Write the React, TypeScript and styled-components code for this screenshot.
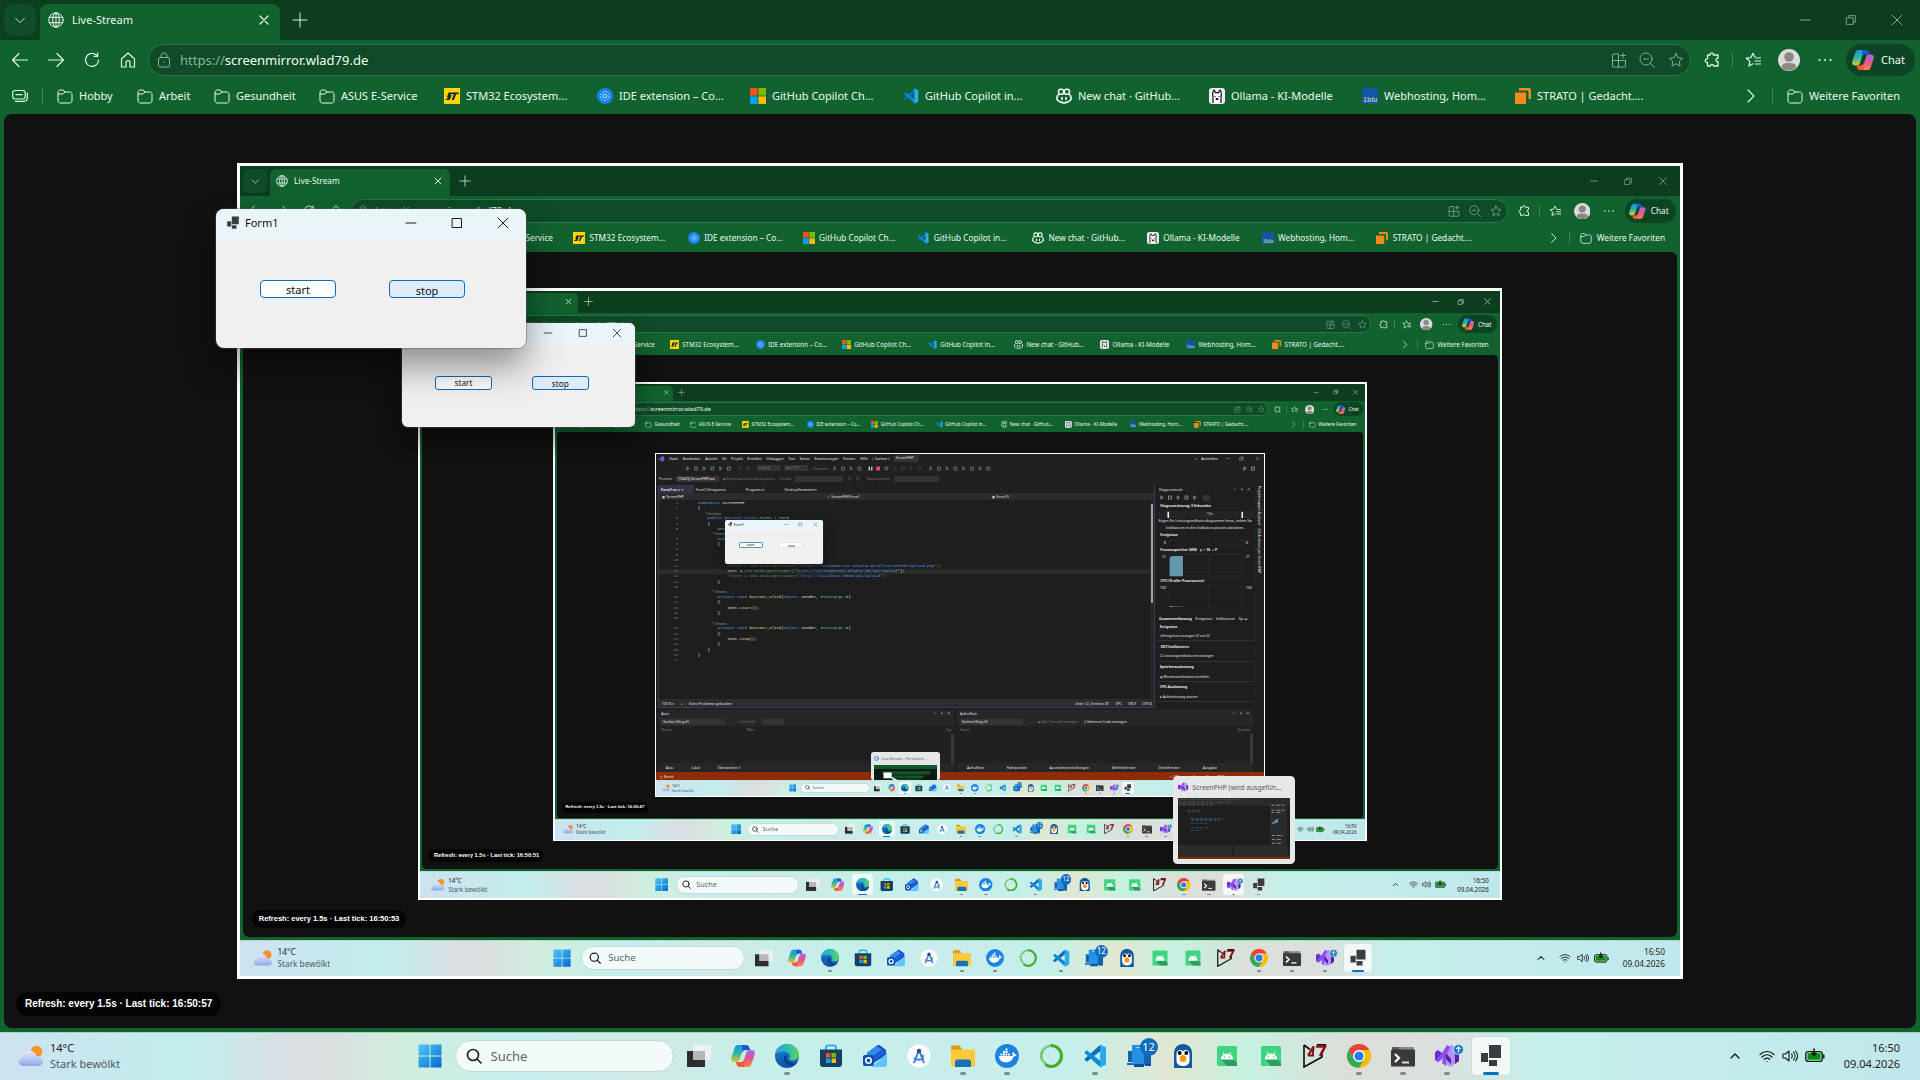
import React from 'react';
import type { ReactNode } from 'react';
import styled, { createGlobalStyle, css } from 'styled-components';

const ui = '"Noto Sans", "Open Sans", sans-serif';
const mono = '"Liberation Mono", monospace';

const GlobalStyle = createGlobalStyle`
  * { box-sizing: border-box; }
  html, body, #root { height: 100%; margin: 0; }
  body { background: #111; overflow: hidden; font: 11px/16px ${ui}; }
  button, input, select { font: inherit; color: inherit; border: 0; background: none; padding: 0; margin: 0; outline: 0; }
  a { color: inherit; text-decoration: none; }
  svg { display: block; flex: none; }
`;

/* ---------- icons ---------- */

const Line = ({ d, s = 16, w = 1, children }: { d?: string; s?: number; w?: number; children?: ReactNode }) => (
  <svg width={s} height={s} viewBox="0 0 16 16" fill="none" stroke="currentColor" strokeWidth={w} strokeLinecap="round" strokeLinejoin="round">
    {d && <path d={d} />}
    {children}
  </svg>
);

const cross = 'M4 4l8 8M12 4l-8 8';
const star = 'M8 1.3l2 4.3 4.7.6-3.5 3.2.9 4.7L8 11.8l-4.1 2.3.9-4.7L1.3 6.2 6 5.6z';
const folder = 'M1 4.5C1 3 2 2 3.500 2H6l2 2h4.500C14 4 15 5 15 6.500v6c0 1.500-1 2.500-2.500 2.500h-9C2 15 1 14 1 12.500zM1 6h4.500L8 4';

const Globe = () => (
  <Line>
    <circle cx="8" cy="8" r="7.200" />
    <ellipse cx="8" cy="8" rx="3.300" ry="7.200" />
    <path d="M8 .8v14.400M1.500 5.300h13M1.500 10.700h13" />
  </Line>
);

const StLogo = () => (
  <svg width="16" height="16" viewBox="0 0 16 16">
    <path fill="#ffd400" d="M0 0h16v16H0z" />
    <path fill="#16233c" d="M4.500 4.500H15l-.8 1.700h-2L9.800 12H7.600L10 6.200H6.400l-.4.8h1.800L5.700 12H1.500l.8-1.500h1.700l.4-1H2.800z" />
  </svg>
);
const IdeLogo = () => (
  <svg width="16" height="16" viewBox="0 0 16 16" fill="none" stroke="#cfe6ff">
    <circle cx="8" cy="8" r="8" fill="#1583ee" stroke="none" />
    <circle cx="8" cy="8" r="4.500" strokeWidth=".9" strokeDasharray="2 1" />
    <circle cx="8" cy="8" r="2" />
  </svg>
);
const MsLogo = ({ s = 16 }: { s?: number }) => (
  <svg width={s} height={s} viewBox="0 0 16 16">
    <path fill="#f25022" d="M0 0h7.600v7.600H0z" />
    <path fill="#7fba00" d="M8.400 0H16v7.600H8.400z" />
    <path fill="#00a4ef" d="M0 8.400h7.600V16H0z" />
    <path fill="#ffb900" d="M8.400 8.400H16V16H8.400z" />
  </svg>
);
const VsCode = ({ s = 16 }: { s?: number }) => (
  <svg width={s} height={s} viewBox="0 0 24 24">
    <path fill="#0a6fc2" d="M17 1L1.200 15.300l2.600 2.400L17.500 7z" />
    <path fill="#1187d8" d="M17 23L1.200 8.700l2.600-2.400L17.500 17z" />
    <path fill="#2da9f2" d="M17 .5l6 2.700v17.600l-6 2.700z" />
  </svg>
);
const GithubCopilot = () => (
  <svg width="16" height="16" viewBox="0 0 16 16" fill="none" stroke="#eafff2" strokeWidth="1.600">
    <rect x="2.600" y="1.200" width="5" height="5" rx="2" />
    <rect x="8.400" y="1.200" width="5" height="5" rx="2" />
    <path d="M2.500 6.500C.6 8 .8 9.500.9 11.500 3 13.800 5.500 14.900 8 14.900s5-1.100 7.100-3.400c.1-2 .3-3.500-1.600-5" />
    <path d="M6 9.500v2M10 9.500v2" strokeLinecap="round" />
  </svg>
);
const Ollama = () => (
  <svg width="16" height="16" viewBox="0 0 16 16">
    <rect width="16" height="16" rx="3" fill="#eee" />
    <path d="M4 15V9c-.5-3 0-6 .8-7 .8 0 1.200 1.500 1.300 2.600h3.800C10 3.500 10.400 2 11.200 2c.8 1 1.300 4 .8 7v6" fill="#fff" stroke="#111" strokeWidth="1.200" />
    <path d="M6 8v1M10 8v1M7 10.500h2v1H7z" stroke="#111" />
  </svg>
);
const OneBlu = () => (
  <svg width="16" height="16" viewBox="0 0 16 16">
    <path fill="#1555a5" d="M0 0h16v16H0z" />
    <text x="1" y="14" fontSize="7" fontWeight="700" fill="#a9c8a0" fontFamily="Liberation Sans, sans-serif">1blu</text>
  </svg>
);
const Strato = () => (
  <svg width="16" height="16" viewBox="0 0 16 16" fill="#f28a1c">
    <path d="M0 4.500h11V16H0zM4 0h10c1 0 2 1 2 2v9h-2.500V4.500c0-1.500-.5-2-2-2H4z" />
  </svg>
);
const Copilot = ({ s = 24 }: { s?: number }) => (
  <svg width={s} height={s} viewBox="0 0 24 24">
    <defs>
      <linearGradient id="cpA" x1="0" y1="0" x2="0" y2="1">
        <stop offset="0" stopColor="#1d8fe8" />
        <stop offset=".5" stopColor="#2bb8a3" />
        <stop offset="1" stopColor="#e9c51e" />
      </linearGradient>
      <linearGradient id="cpB" x1="0" y1="0" x2="0" y2="1">
        <stop offset="0" stopColor="#a66bf0" />
        <stop offset=".5" stopColor="#e7528f" />
        <stop offset="1" stopColor="#f98d3a" />
      </linearGradient>
    </defs>
    <path fill="url(#cpA)" d="M7 1h8c-2 1-2.500 3-3.200 5L9 14.500C8.300 17 7.500 18 5 18H3.500C.5 18-.5 16 .5 13L3.200 5C4 2.500 5 1 7 1z" />
    <path fill="#1b57c9" d="M11 1h4.500C17.500 1 18 2.500 18.500 4l.7 2H15c-2 0-2.800 1-3.400 2.600z" />
    <path fill="url(#cpB)" d="M17 23H9c2-1 2.500-3 3.200-5L15 9.500C15.700 7 16.500 6 19 6h1.500c3 0 4 2 3 5l-2.700 8c-.8 2.500-1.800 4-3.800 4z" />
    <path fill="#f15a3a" d="M13 23H8.500C6.500 23 6 21.500 5.500 20l-.7-2H9c2 0 2.800-1 3.400-2.600z" />
  </svg>
);
const Edge = () => (
  <svg width="24" height="24" viewBox="0 0 24 24">
    <defs>
      <linearGradient id="edA" x1="0" y1="0" x2="1" y2="0">
        <stop offset="0" stopColor="#2a9fe0" />
        <stop offset=".6" stopColor="#30c1a8" />
        <stop offset="1" stopColor="#66d254" />
      </linearGradient>
      <linearGradient id="edB" x1="0" y1="0" x2="0" y2="1">
        <stop offset="0" stopColor="#1b8ad6" />
        <stop offset="1" stopColor="#0b4fa3" />
      </linearGradient>
    </defs>
    <circle cx="12" cy="12" r="12" fill="url(#edB)" />
    <path fill="url(#edA)" d="M.3 10C1.500 4 6.200 0 12 0c7 0 12 5 12 10.500 0 3.500-2.700 6-6.200 6-2.800 0-4.200-1-3.600-2 1-1.200 1-2.400.6-3.500C14 9 12 7.600 9.200 7.600 5 7.600 1.500 9 .3 10z" />
    <path fill="#0d3f88" d="M9 12.500c-1 4 2 9.500 8 9.300 2-.1 4-1.300 5-3-3 1.400-6.500.7-9-1.500-1.700-1.500-1.700-3.500-.7-5.200C11 11.200 9.500 11.200 9 12.500z" />
  </svg>
);
const TaskView = () => (
  <svg width="24" height="24" viewBox="0 0 24 24">
    <path fill="#2d2d2d" d="M0 7h18v16H0z" />
    <path fill="#eef0f0" d="M6 1h18v15H6z" opacity=".95" />
    <path fill="#b5b8b8" d="M6 7h12v9H6z" />
  </svg>
);
const Store = () => (
  <svg width="24" height="24" viewBox="0 0 24 24">
    <path d="M7 6V3.500C7 2 8 1.500 9 1.500h6c1 0 2 .5 2 2V6" fill="none" stroke="#27b3ea" strokeWidth="2" />
    <path fill="#173f66" d="M1 5.500h22V20c0 2-1 3-3 3H4c-2 0-3-1-3-3z" />
    <path fill="#f25022" d="M7 9h4.500v4.500H7z" />
    <path fill="#7fba00" d="M12.500 9H17v4.500h-4.500z" />
    <path fill="#00a4ef" d="M7 14.500h4.500V19H7z" />
    <path fill="#ffb900" d="M12.500 14.500H17V19h-4.500z" />
  </svg>
);
const Outlook = () => (
  <svg width="24" height="24" viewBox="0 0 24 24">
    <path fill="#1c3fb8" d="M4 9L14 1.500c1-.7 2-.7 3 0l6 4.500v5L6 22H4z" />
    <path fill="#2f8df0" d="M4 9l10-7 5 3.500L6 15z" />
    <path fill="#1b5fd6" d="M6 15L20 5l3.500 3.500L8 20z" />
    <path fill="#5fc4ff" d="M24 9v11c0 2-1 3-3 3H9z" />
    <rect x="0" y="11" width="11" height="11" rx="2" fill="#0f4fae" />
    <circle cx="5.500" cy="16.500" r="2.700" fill="none" stroke="#fff" strokeWidth="1.600" />
  </svg>
);
const Studio = () => (
  <svg width="24" height="24" viewBox="0 0 24 24">
    <circle cx="12" cy="12" r="11.500" fill="#fbfdfe" />
    <path d="M12 6L7 19M12 6l5 13M7 14c3 2 7 2 10 0" stroke="#3f7be8" strokeWidth="2" fill="none" />
    <circle cx="12" cy="7" r="2.200" fill="#2b4c86" />
    <path d="M14 10l4 2-3 2z" fill="#35a860" />
  </svg>
);
const Explorer = () => (
  <svg width="24" height="24" viewBox="0 0 24 24">
    <path fill="#d99a16" d="M0 3c0-1 .6-1.500 1.500-1.500h7L11 5v3H0z" />
    <path fill="#fcc93a" d="M0 5.500h22.500c1 0 1.500.5 1.500 1.500v14c0 1-.5 1.500-1.500 1.500h-21C.5 22.500 0 22 0 21z" />
    <path fill="#1771b8" d="M4 23v-5c0-1.500 1-2.500 2.500-2.500h11c1.500 0 2.500 1 2.500 2.500v5z" />
  </svg>
);
const Docker = () => (
  <svg width="24" height="24" viewBox="0 0 24 24">
    <circle cx="12" cy="12" r="12" fill="#1d83e2" />
    <path fill="#fff" d="M4 12h13.500c.3-1 .2-2-.3-3l1-1c.9.700 1.300 1.500 1.300 2.400.7-.2 1.500-.1 2 .3-.5 1.100-1.500 1.700-2.800 1.700C17.500 16 15 18.300 11 18.300 6.500 18.300 4.200 16 4 12zM5.500 9.500h2v2h-2zM8 9.500h2v2H8zM10.500 9.500h2v2h-2zM13 9.500h2v2h-2zM8 7h2v2H8zM10.500 7h2v2h-2zM10.500 4.500h2v2h-2z" />
  </svg>
);
const Ring = () => (
  <svg width="24" height="24" viewBox="0 0 24 24" fill="none" stroke="#41ad2e">
    <path d="M12 1.500a10.500 10.500 0 0 1 0 21c-2 0-4-.8-5.500-2" strokeWidth="3" />
    <path d="M7 20C-1 14 1.500 3.500 12 1.500" strokeWidth="2.800" strokeDasharray="1.200 1" />
  </svg>
);
const Phone = () => (
  <svg width="24" height="24" viewBox="0 0 24 24">
    <path fill="#1463b0" d="M1 7h6v11H1zM0 19h9v2H0zM12 8h12v13H12z" />
    <path fill="#2492e0" d="M5 1h12v19H5z" />
    <path fill="#0f4e94" d="M7 20h10v3H7zM18 20h6v2h-6z" />
    <path fill="#8fd0fb" d="M9 3h4v1H9z" />
  </svg>
);
const Penguin = () => (
  <svg width="24" height="24" viewBox="0 0 24 24">
    <path fill="#0e5aa0" d="M3 24V9c0-5.500 4-9 9-9s9 3.500 9 9v15z" />
    <path fill="#fff" d="M5.500 10C5.500 5 12 5 12 8c0-3 6.500-3 6.500 2v7c0 3-3 5-6.500 5s-6.500-2-6.500-5z" />
    <circle cx="8.700" cy="9" r="1.900" />
    <circle cx="15.300" cy="9" r="1.900" />
    <ellipse cx="12" cy="14.500" rx="3.300" ry="3.600" fill="#f5941e" />
  </svg>
);
const Android = () => (
  <svg width="24" height="24" viewBox="0 0 24 24">
    <rect x="2" y="2" width="20" height="20" rx="1.500" fill="#3fd382" />
    <path fill="#2a9e60" d="M18 15l4 4v3H12l-6-7z" />
    <path fill="#fff" d="M5.800 15.500c.2-2.500 1.300-4.200 3-5.200L7.700 8.500l.7-.4 1.200 1.800a7 7 0 0 1 4.800 0l1.200-1.800.7.400-1.100 1.800c1.700 1 2.800 2.700 3 5.200z" />
    <circle cx="9.500" cy="13" r=".8" fill="#3fd382" />
    <circle cx="14.500" cy="13" r=".8" fill="#3fd382" />
  </svg>
);
const Seventeen = () => (
  <svg width="24" height="24" viewBox="0 0 24 24" fill="none" stroke="#0a0a0a" strokeWidth="1.600">
    <path d="M1 1v22l18-10V8" />
    <path d="M1 1l6 4.500M23 .8h-9" />
    <path d="M5 11.500L10.500 2.500 9.500 12M5 11.500h6" stroke="#8c1018" strokeWidth="2.200" />
    <path d="M13 2.500h9L17 12" stroke="#8c1018" strokeWidth="2.600" />
  </svg>
);
const Chrome = () => (
  <svg width="24" height="24" viewBox="0 0 24 24">
    <path fill="#ea4335" d="M1.600 6A12 12 0 0 1 22.400 6H12a6 6 0 0 0-5.200 9z" />
    <path fill="#fbbc04" d="M22.400 6A12 12 0 0 1 12 24l5.200-9A6 6 0 0 0 12 6z" />
    <path fill="#34a853" d="M12 24A12 12 0 0 1 1.600 6l5.200 9A6 6 0 0 0 17.200 15z" />
    <circle cx="12" cy="12" r="5.800" fill="#fff" />
    <circle cx="12" cy="12" r="4.600" fill="#2a7bea" />
  </svg>
);
const Terminal = () => (
  <svg width="24" height="24" viewBox="0 0 24 24">
    <path fill="#8a8a8a" d="M1 3h22v4H1z" />
    <path fill="#5c5c5c" d="M1 3h7v4H1z" />
    <rect x="0" y="5.500" width="24" height="17" rx="1" fill="#3a3a3a" />
    <path d="M4 10l4 4-4 4" stroke="#fff" strokeWidth="2.200" fill="none" />
    <path d="M11 18.500h7" stroke="#ddd" strokeWidth="2" />
  </svg>
);
const VisualStudio = ({ s = 24, up = false }: { s?: number; up?: boolean }) => (
  <svg width={s} height={s} viewBox="0 0 24 24" overflow="visible">
    <path fill="#6a2fd0" d="M0 8l3-2 4 3v6l-4 3-3-2z" />
    <path fill="#8b4ff0" d="M7 9l5-8 4 2-4 10-1 9-4-3 1-5-5 4-2-2z" />
    <path fill="#b18af8" d="M12 9l4-8 4 2v17l-5 3-4-3V9z" opacity=".9" />
    <path fill="#5320ac" d="M11 9l5 6v5l-5-5zM20 6l4 2v9l-4 3z" />
    {up && (
      <g>
        <circle cx="23.500" cy="5.500" r="5" fill="#1577c4" stroke="#e6f2f2" strokeWidth=".8" />
        <path d="M23.500 8.500V3M21.300 5.200L23.500 3l2.200 2.200" stroke="#fff" strokeWidth="1.200" fill="none" />
      </g>
    )}
  </svg>
);
const FormIcon = ({ s = 24 }: { s?: number }) => (
  <svg width={s} height={s} viewBox="0 0 24 24" fill="#3c3c40">
    <path d="M10 1h12v13H10zM2 9h7v9H2zM10 16h8v6h-8z" />
  </svg>
);
const StartLogo = () => (
  <svg width="24" height="24" viewBox="0 0 24 24">
    <defs>
      <linearGradient id="stA" x1="0" y1="0" x2="1" y2="1">
        <stop offset="0" stopColor="#4fcbfa" />
        <stop offset="1" stopColor="#0568cc" />
      </linearGradient>
    </defs>
    <path fill="url(#stA)" d="M.5.5h11v11H.5zM12.500.5h11v11h-11zM.5 12.500h11v11H.5zM12.500 12.500h11v11h-11z" />
  </svg>
);
const Weather = () => (
  <svg width="24" height="24" viewBox="0 0 24 24">
    <defs>
      <linearGradient id="weA" x1="0" y1="0" x2="0" y2="1">
        <stop offset="0" stopColor="#e6ebfc" />
        <stop offset="1" stopColor="#8fa9e8" />
      </linearGradient>
    </defs>
    <circle cx="17.500" cy="7.500" r="5.800" fill="#f5932a" />
    <path fill="url(#weA)" d="M5 22c-3 0-5-1.700-5-4s1.700-4 4-4.200C4.300 9.500 7 7 11 7c3.500 0 6 2.300 6.500 5.500C21 12.500 24 14 24 17.200S21.500 22 19 22z" />
  </svg>
);
const Battery = () => (
  <svg width="20" height="16" viewBox="0 0 20 16">
    <rect x=".7" y="3.500" width="16.600" height="10" rx="2.500" fill="#0d8a16" stroke="#1a1a1a" strokeWidth="1.200" />
    <rect x="2" y="4.800" width="14" height="7.400" rx="1.300" fill="none" stroke="#d9f2e4" strokeWidth=".8" />
    <path d="M18.800 6.500v4" stroke="#1a1a1a" strokeWidth="1.400" />
    <path d="M9 .5v6M6.500 4.500L9 7.500l2.500-3" stroke="#151515" strokeWidth="1.600" fill="none" />
  </svg>
);
const Avatar = () => (
  <svg width="22" height="22" viewBox="0 0 22 22">
    <circle cx="11" cy="11" r="11" fill="#dcdcdc" />
    <circle cx="11" cy="8" r="4.800" fill="#8c8884" />
    <path d="M3.500 18.500C4 14.500 7.500 14 11 14s7 .5 7.500 4.500A11 11 0 0 1 3.500 18.500z" fill="#8c8884" />
  </svg>
);

/* ---------- browser ---------- */

const Desktop = styled.div<{ $scale: number }>`
  zoom: ${p => p.$scale};
  flex: 1;
  min-width: 0;
  min-height: 0;
  height: ${p => (p.$scale === 1 ? '100%' : 'auto')};
  position: relative;
  display: flex;
  flex-direction: column;
  overflow: hidden;
  background: #11622f;
  font-size: 11px;
  line-height: 16px;
`;
const TabStrip = styled.header`
  height: 40px;
  display: flex;
  align-items: center;
  padding-left: 4px;
  background: #0c3d1f;
  color: #d3eadb;
`;
const IconButton = styled.button<{ $w?: number; $dim?: boolean }>`
  width: ${p => p.$w ?? 36}px;
  height: 32px;
  flex: none;
  display: flex;
  align-items: center;
  justify-content: center;
  color: ${p => (p.$dim ? '#7fae90' : '#dff3e6')};
`;
const TabSearch = styled(IconButton)`
  border-radius: 8px;
  background: #0e4d27;
`;
const Tab = styled.div`
  width: 240px;
  height: 36px;
  margin: 4px 0 0 4px;
  padding: 0 8px 4px;
  display: flex;
  align-items: center;
  gap: 8px;
  border-radius: 8px 8px 0 0;
  background: #11622f;
  color: #e6f7ec;
  & > span { flex: 1; }
`;
const Spacer = styled.div`flex: 1;`;
const Toolbar = styled.div`
  height: 40px;
  padding: 0 5px 0 2px;
  display: flex;
  align-items: center;
`;
const Address = styled.div`
  flex: 1;
  height: 32px;
  margin: 0 3px 0 2px;
  padding: 0 0 0 7px;
  display: flex;
  align-items: center;
  border: 1px solid #2b7445;
  border-radius: 16px;
  background: #0e4b26;
  color: #88b898;
  font-size: 13px;
  & > svg { margin-right: 8px; }
  & > input { flex: 1; min-width: 0; color: #f2fff6; }
`;
const Separator = styled.div<{ $m?: number }>`
  width: 1px;
  height: 16px;
  margin: 0 ${p => p.$m ?? 2}px;
  background: #3d8155;
`;
const ChatButton = styled.button`
  height: 32px;
  width: 69px;
  margin-left: 3px;
  padding-left: 6px;
  display: flex;
  align-items: center;
  gap: 7px;
  border-radius: 16px;
  background: #0c4524;
  color: #f1fff6;
  font-size: 11px;
`;
const Bookmarks = styled.nav`
  height: 34px;
  padding: 0 18px 2px 12px;
  display: flex;
  align-items: center;
  color: #eafaf0;
`;
const Bookmark = styled.a<{ $w?: number }>`
  width: ${p => (p.$w ? `${p.$w}px` : 'auto')};
  flex: none;
  display: flex;
  align-items: center;
  gap: 6px;
  white-space: nowrap;
`;
const Page = styled.main`
  position: relative;
  flex: 1;
  min-height: 0;
  margin: 0 4px 4px;
  padding: 49px 233px;
  display: flex;
  border-radius: 8px;
  background: #111;
`;
const Frame = styled.section`
  flex: 1;
  min-width: 0;
  display: flex;
  padding: 3px;
  background: #fff;
`;
const Status = styled.div`
  position: absolute;
  left: 12px;
  bottom: 12px;
  padding: 4px 9px;
  border-radius: 12px;
  background: #040404;
  color: #fff;
  font: 700 10px/16px "Liberation Sans", sans-serif;
  white-space: nowrap;
`;

const folders = [
  { name: 'Hobby', w: 80 },
  { name: 'Arbeit', w: 77 },
  { name: 'Gesundheit', w: 105 },
  { name: 'ASUS E-Service', w: 125 },
];
const sites = [
  { name: 'STM32 Ecosystem...', icon: <StLogo /> },
  { name: 'IDE extension – Co...', icon: <IdeLogo /> },
  { name: 'GitHub Copilot Ch...', icon: <MsLogo /> },
  { name: 'GitHub Copilot in...', icon: <VsCode /> },
  { name: 'New chat · GitHub...', icon: <GithubCopilot /> },
  { name: 'Ollama - KI-Modelle', icon: <Ollama /> },
  { name: 'Webhosting, Hom...', icon: <OneBlu /> },
  { name: 'STRATO | Gedacht....', icon: <Strato /> },
];

const Browser = ({ focused, tick, children }: { focused: boolean; tick: string; children: ReactNode }) => (
  <>
    <TabStrip>
      <TabSearch $w={32} aria-label="Tabs"><Line d="M3 6l5 5 5-5" s={14} /></TabSearch>
      <Tab>
        <Globe />
        <span>Live-Stream</span>
        <IconButton $w={16} aria-label="Tab schließen"><Line d={cross} w={1.3} /></IconButton>
      </Tab>
      <IconButton $w={40} aria-label="Neuer Tab"><Line d="M8 1v14M1 8h14" /></IconButton>
      <Spacer />
      <IconButton $w={46} $dim={!focused} aria-label="Minimieren"><Line d="M3 8h10" /></IconButton>
      <IconButton $w={46} $dim={!focused} aria-label="Wiederherstellen"><Line d="M3 5.500h7.500V13H3zM5.500 5.500V3H13v7.500h-2.500" s={14} /></IconButton>
      <IconButton $w={46} $dim={!focused} aria-label="Schließen"><Line d="M3 3l10 10M13 3L3 13" /></IconButton>
    </TabStrip>
    <Toolbar>
      <IconButton aria-label="Zurück"><Line d="M15.500 8H.5M7 1.500L.5 8 7 14.500" w={1.2} /></IconButton>
      <IconButton aria-label="Vorwärts"><Line d="M.5 8h15M9 1.500L15.500 8 9 14.500" w={1.2} /></IconButton>
      <IconButton aria-label="Aktualisieren"><Line d="M14.500 8A6.500 6.500 0 1 1 12 2.800l1.500 1.400M13.700.8v3.600h-3.600" w={1.2} /></IconButton>
      <IconButton aria-label="Startseite"><Line d="M1.500 7L8 1l6.500 6v8h-4.500v-4.500c0-2.500-4-2.500-4 0V15H1.500z" w={1.2} /></IconButton>
      <Address>
        <Line><rect x="2.500" y="5.500" width="11" height="9.500" rx="1.500" /><path d="M5 5.500V4c0-4 6-4 6 0v1.500M8 10v.5" /></Line>
        <span>https://</span>
        <input aria-label="Adresse" defaultValue="screenmirror.wlad79.de" />
        <IconButton $w={28} $dim aria-label="App installieren"><Line d="M7 2H2.500C2 2 1.500 2.500 1.500 3v11c0 .5.5 1 1 1h11c.5 0 1-.5 1-1V9M1.500 8.500h13M7.500 2v13M12 1v5M9.500 3.500h5" /></IconButton>
        <IconButton $w={28} $dim aria-label="Zoom"><Line><circle cx="7" cy="7" r="6" /><path d="M11.500 11.500l4 4M4.500 7h5" /></Line></IconButton>
        <IconButton $w={29} $dim aria-label="Favorit"><Line d={star} /></IconButton>
      </Address>
      <IconButton aria-label="Erweiterungen"><Line w={1.300} d="M4 3h2.200c-.4-2.800 3.600-2.800 3.200 0H14v3.500c-2.800-.4-2.800 3.600 0 3.200V14H9.500c.3-2-3.400-2-3.100 0H3.500v-3.500c-3 .3-3-3.900 0-3.600V3z" /></IconButton>
      <Separator />
      <IconButton aria-label="Favoriten"><Line w={1.200} d="M10 5.200L8 1.300 6 5.600l-4.700.6 3.500 3.200-.9 4.700L8 11.800M11 6h4.500M10 9h5.500M10.500 12h5" /></IconButton>
      <IconButton aria-label="Profil"><Avatar /></IconButton>
      <IconButton aria-label="Mehr"><Line d="M2.500 8h.1M8 8h.1M13.500 8h.1" w={2} /></IconButton>
      <ChatButton><Copilot s={22} />Chat</ChatButton>
    </Toolbar>
    <Bookmarks>
      <IconButton $w={16} aria-label="Arbeitsbereiche">
        <Line w={1.200}><rect x=".7" y="2.500" width="12.500" height="8.500" rx="2.500" /><path d="M4 6.700h6M3.500 13.300h8.300c2 0 3.500-1.500 3.500-3.500V5" /></Line>
      </IconButton>
      <Separator $m={14} />
      {folders.map(f => <Bookmark key={f.name} $w={f.w} href="#"><Line d={folder} />{f.name}</Bookmark>)}
      {sites.map(s => <Bookmark key={s.name} $w={153} href="#">{s.icon}{s.name}</Bookmark>)}
      <Spacer />
      <IconButton $w={16} aria-label="Weitere"><Line d="M6 2l6 6-6 6" w={1.200} /></IconButton>
      <Separator $m={14} />
      <Bookmark $w={115} href="#"><Line d={folder} />Weitere Favoriten</Bookmark>
    </Bookmarks>
    <Page>
      <Frame>{children}</Frame>
      <Status>Refresh: every 1.5s · Last tick: {tick}</Status>
    </Page>
  </>
);

/* ---------- taskbar ---------- */

const Bar = styled.footer`
  position: relative;
  height: 48px;
  flex: none;
  display: grid;
  grid-template-columns: 1fr auto 1fr;
  align-items: center;
  box-shadow: inset 0 1px #a9d0c2;
  color: #1c1c1c;
  background: linear-gradient(90deg, #cde2f0 0, #c2edec 10%, #dadfe4 15%, #dadfe0 17%, #cfeedd 21%, #c6eeee 27%, #cfe9e6 33%, #c5efe9 42%, #c9ecec 50%, #c5efe9 56%, #e0e7d0 61%, #c6f1e0 65%, #dadfd9 70%, #dbe0dd 75%, #c5efea 80%, #c0e8ec 100%);
`;
const WeatherButton = styled.button`
  justify-self: start;
  margin-left: 19px;
  display: flex;
  align-items: center;
  gap: 7px;
  text-align: left;
  font-size: 11px;
  & small { display: block; font-size: 11px; color: #4d5a5e; }
`;
const Apps = styled.div`display: flex; align-items: center;`;
const SearchBox = styled.label`
  width: 219px;
  height: 32px;
  margin: 0 3px 0 3px;
  padding-left: 10px;
  display: flex;
  align-items: center;
  gap: 9px;
  border-radius: 16px;
  border: 1px solid #c4dada;
  background: #f3fbfa;
  color: #222;
  font-size: 13px;
  & > input { flex: 1; min-width: 0; }
  & > input::placeholder { color: #5b6366; opacity: 1; }
`;
const AppButton = styled.button<{ $lit?: boolean }>`
  position: relative;
  width: 38px;
  height: 38px;
  margin: 0 3px;
  display: flex;
  align-items: center;
  justify-content: center;
  border-radius: 4px;
  ${p => p.$lit && css`background: rgba(255, 255, 255, 0.72); box-shadow: 0 0 1px rgba(0, 0, 0, 0.3);`}
`;
const Indicator = styled.i<{ $active: boolean }>`
  position: absolute;
  bottom: 0;
  left: calc(50% - ${p => (p.$active ? 8 : 3)}px);
  width: ${p => (p.$active ? 16 : 6)}px;
  height: 3px;
  border-radius: 2px;
  background: ${p => (p.$active ? '#0b6fc4' : '#7f8a8a')};
`;
const Badge = styled.span`
  position: absolute;
  top: 1px;
  right: 0;
  width: 18px;
  height: 18px;
  border-radius: 9px;
  background: #0f6cbd;
  color: #fff;
  font-size: 11px;
  line-height: 17px;
`;
const Tray = styled.div`
  justify-self: end;
  margin-right: 20px;
  display: flex;
  align-items: center;
  gap: 7px;
`;
const TrayChevron = styled.button`margin-right: 9px;`;
const Clock = styled.div`
  width: 68px;
  text-align: right;
  font-size: 11px;
  line-height: 16px;
`;

const apps: { name: string; icon: ReactNode; runs?: boolean; badge?: string }[] = [
  { name: 'Taskansicht', icon: <TaskView /> },
  { name: 'Copilot', icon: <Copilot /> },
  { name: 'Edge', icon: <Edge />, runs: true },
  { name: 'Store', icon: <Store /> },
  { name: 'Outlook', icon: <Outlook /> },
  { name: 'Android Studio', icon: <Studio /> },
  { name: 'Explorer', icon: <Explorer />, runs: true },
  { name: 'Docker', icon: <Docker />, runs: true },
  { name: 'Anaconda', icon: <Ring /> },
  { name: 'VS Code', icon: <VsCode s={24} />, runs: true },
  { name: 'Smartphone-Link', icon: <Phone />, badge: '12' },
  { name: 'Pinguin', icon: <Penguin /> },
  { name: 'Emulator 1', icon: <Android /> },
  { name: 'Emulator 2', icon: <Android /> },
  { name: 'Siebzehn', icon: <Seventeen /> },
  { name: 'Chrome', icon: <Chrome />, runs: true },
  { name: 'Terminal', icon: <Terminal />, runs: true },
  { name: 'Visual Studio', icon: <VisualStudio up />, runs: true },
  { name: 'Form1', icon: <FormIcon />, runs: true },
];

const Taskbar = ({ active, hovered, tray = true }: { active: string; hovered?: string; tray?: boolean }) => (
  <Bar>
    <WeatherButton><Weather /><span>14°C<small>Stark bewölkt</small></span></WeatherButton>
    <Apps>
      <AppButton aria-label="Start"><StartLogo /></AppButton>
      <SearchBox>
        <Line w={1.700}><circle cx="7" cy="7" r="5.500" /><path d="M11 11l4 4" /></Line>
        <input aria-label="Suche" placeholder="Suche" />
      </SearchBox>
      {apps.map(a => (
        <AppButton key={a.name} aria-label={a.name} $lit={a.name === active || a.name === hovered}>
          {a.icon}
          {a.badge && <Badge>{a.badge}</Badge>}
          {a.runs && <Indicator $active={a.name === active} />}
        </AppButton>
      ))}
    </Apps>
    {tray && (
      <Tray>
        <TrayChevron aria-label="Ausgeblendete Symbole"><Line d="M4 10l4-4 4 4" w={1.400} /></TrayChevron>
        <Line w={1.200} d="M1 6.500c4-4 10-4 14 0M3 9c3-3 7-3 10 0M5.300 11.300c1.700-1.600 3.700-1.600 5.400 0M8 13.500v.1" />
        <Line w={1.100} d="M1 6v4h2.500L7 13V3L3.500 6zM9.500 6c1 1.200 1 2.800 0 4M11.500 4.200c2 2.200 2 5.400 0 7.600M13.500 3c2.500 3 2.500 7 0 10" />
        <Battery />
        <Clock>16:50<br />09.04.2026</Clock>
      </Tray>
    )}
  </Bar>
);

/* ---------- floating windows ---------- */

const FormWindow = styled.section`
  position: absolute;
  left: 216px;
  top: 209px;
  width: 310px;
  height: 139px;
  z-index: 3;
  display: flex;
  flex-direction: column;
  overflow: hidden;
  border-radius: 8px;
  background: #f0f0f0;
  color: #111;
  box-shadow: 0 0 1px 1px rgba(90, 90, 90, 0.4), 0 18px 36px rgba(0, 0, 0, 0.42);
  font-size: 11px;
`;
const FormTitle = styled.header`
  height: 30px;
  padding: 0 0 2px 10px;
  display: flex;
  align-items: center;
  background: #e9f5f9;
  & > span { margin-left: 5px; }
  & button { color: #1b1b1b; height: 28px; }
`;
const FormBody = styled.div`
  flex: 1;
  padding: 41px 44px;
  display: flex;
  align-items: flex-start;
  gap: 53px;
`;
const FormButton = styled.button<{ $border: string; $fill: string; $low?: boolean }>`
  width: 76px;
  height: 18px;
  overflow: hidden;
  display: flex;
  justify-content: center;
  align-items: center;
  padding-top: ${p => (p.$low ? 3 : 1)}px;
  border: 1px solid ${p => p.$border};
  border-radius: 4px;
  background: ${p => p.$fill};
  line-height: 14px;
`;

const Form = ({ idle }: { idle?: boolean }) => (
  <FormWindow>
    <FormTitle>
      <FormIcon s={14} /><span>Form1</span>
      <Spacer />
      <IconButton $w={46} aria-label="Minimieren"><Line d="M3 8h10" /></IconButton>
      <IconButton $w={46} aria-label="Maximieren"><Line d="M3.500 3.500h9v9h-9z" /></IconButton>
      <IconButton $w={46} aria-label="Schließen"><Line d="M3 3l10 10M13 3L3 13" /></IconButton>
    </FormTitle>
    <FormBody>
      <FormButton $border={idle ? '#4f98b4' : '#0a6cbe'} $fill="#fdfdfd">start</FormButton>
      <FormButton $border={idle ? '#e4e4e4' : '#0a6cbe'} $fill={idle ? '#fdfdfd' : '#dfecf8'} $low>stop</FormButton>
    </FormBody>
  </FormWindow>
);

const Preview = styled.section<{ $left: number; $bottom: number; $h: number }>`
  position: absolute;
  z-index: 4;
  left: ${p => p.$left}px;
  bottom: ${p => p.$bottom}px;
  width: 216px;
  height: ${p => p.$h}px;
  padding: 0 8px;
  overflow: hidden;
  border-radius: 8px;
  background: #e6e8e7;
  color: #555;
  font-size: 12px;
`;
const PreviewTitle = styled.div`
  height: 40px;
  display: flex;
  align-items: center;
  gap: 8px;
  white-space: nowrap;
  overflow: hidden;
`;

const IdeThumb = () => (
  <svg width="200" height="108" viewBox="0 0 200 110" preserveAspectRatio="none">
    <path fill="#1e1e1e" d="M0 0h200v110H0z" />
    <path fill="#2b2b2e" d="M0 0h200v14H0zM0 85h96v20H0zM98 85h98v20H98zM164 14h30v70h-30z" />
    <path stroke="#777" strokeDasharray="4 2 7 3" d="M2 3h110M2 8h90M2 12h60" />
    <path stroke="#44639a" strokeDasharray="6 2" d="M16 22h22M22 37h60M22 41h56M22 46h30M22 59h20" />
    <path stroke="#478a6a" strokeDasharray="5 3" d="M18 25h24M24 39h46M24 54h30" />
    <path stroke="#ddd" strokeDasharray="5 3 8 2" d="M166 13h24M166 22h26M166 26h18M167 68h20M167 75h16M167 82h18" />
    <path fill="#5b8fa8" d="M166 46l12-10v8l-12 4z" />
    <path fill="#7a2a08" d="M0 106h200v4H0z" />
  </svg>
);
const StreamThumb = () => (
  <svg width="200" height="112" viewBox="0 0 200 112">
    <path fill="#0d1a12" d="M0 0h200v112H0z" />
    <path fill="#14562c" d="M0 0h200v13H0zM26 20h152v10H26zM50 33h106v9H50zM64 45h80v8H64z" />
    <path fill="#fff" d="M30 24h26v14l16 8 8 12-12-4-12-12H30z" />
  </svg>
);

/* ---------- code editor ---------- */

const Ide = styled.main`
  flex: 1;
  min-height: 0;
  display: flex;
  flex-direction: column;
  background: #202021;
  color: #e6e6e6;
  font-size: 11px;
`;
const Row = styled.div<{ $h: number; $gap?: number; $pad?: string; $bg?: string; $dim?: boolean }>`
  height: ${p => p.$h}px;
  flex: none;
  display: flex;
  align-items: center;
  gap: ${p => p.$gap ?? 8}px;
  padding: ${p => p.$pad ?? '0 8px'};
  background: ${p => p.$bg ?? 'transparent'};
  color: ${p => (p.$dim ? '#77777a' : 'inherit')};
  white-space: nowrap;
  overflow: hidden;
`;
const Field = styled.span<{ $w: number }>`
  width: ${p => p.$w}px;
  height: 20px;
  padding: 0 6px;
  line-height: 20px;
  background: #343436;
`;
const Split = styled.div`flex: 1; min-height: 0; display: flex;`;
const Editor = styled.section`
  flex: 1;
  min-width: 0;
  margin-left: 6px;
  display: flex;
  flex-direction: column;
  border: 2px solid #3c3a52;
  border-top: 0;
  background: #1e1e1e;
`;
const FileTab = styled.button<{ $w: number; $on?: boolean }>`
  width: ${p => p.$w}px;
  height: 27px;
  text-align: left;
  padding-left: 6px;
  font-weight: ${p => (p.$on ? 700 : 400)};
  background: ${p => (p.$on ? '#343344' : 'transparent')};
`;
const NavCell = styled.span`flex: 1; padding-left: 10px;`;
const CodeArea = styled.div`
  flex: 1;
  min-width: 0;
  overflow: hidden;
  padding-top: 2px;
  font: 13px/17px ${mono};
`;
const ScrollTrack = styled.div`
  width: 14px;
  padding: 12px 4px;
  background: #262628;
  &::before { content: ''; display: block; height: 313px; background: #a2a2a4; }
`;
const CodeLine = styled.div<{ $lens?: boolean; $current?: boolean }>`
  height: ${p => (p.$lens ? 14 : 17)}px;
  display: grid;
  grid-template-columns: 60px 1fr;
  column-gap: 62px;
  white-space: pre;
  background: ${p => (p.$current ? '#2b2b2b' : 'transparent')};
  ${p => p.$lens && css`font: 10px/14px ${ui}; color: #999;`}
  & > span:first-child { text-align: right; color: #6d7a84; }
`;
const Tok = styled.span<{ $c: string }>`color: ${p => p.$c};`;
const Side = styled.aside`
  width: 308px;
  margin-left: 4px;
  display: flex;
  flex-direction: column;
  background: #1e1e1f;
`;
const RightRail = styled.aside`
  width: 31px;
  padding-top: 4px;
  writing-mode: vertical-rl;
  line-height: 30px;
`;
const Heading = styled.div`
  height: 27px;
  line-height: 27px;
  padding-left: 12px;
  font-weight: 700;
`;
const Note = styled.p`
  margin: 0;
  text-align: center;
  line-height: 20px;
  white-space: nowrap;
  overflow: hidden;
`;
const Entry = styled.div`
  height: 64px;
  padding: 8px 10px 0;
  border-bottom: 1px solid #333;
  & > b { display: block; height: 30px; }
`;
const Bottom = styled.div`height: 202px; flex: none; display: flex; gap: 10px; padding: 4px 34px 0 8px;`;
const ToolPane = styled.section`
  flex: 1;
  display: flex;
  flex-direction: column;
  background: #272728;
`;
const PaneBody = styled.div`flex: 1; border-right: 10px solid #3a3a3c; background: #202021;`;

const K = '#5a9ce0', T = '#4fcdb2', S = '#dcaa86', G = '#5fa551', W = '#e6e6e6', Y = '#e2dea8', U = '#5599e6';
type Token = [string, string];
const code: { n?: number; lens?: string; t?: Token[]; current?: boolean }[] = [
  { n: 1, t: [[K, 'namespace '], [W, 'ScreenPHP']] },
  { n: 2, t: [[W, '{']] },
  { lens: '         7 Verweise' },
  { n: 3, t: [[K, '    public partial class '], [T, 'Form1'], [W, ' : '], [T, 'Form']] },
  { n: 4, t: [[W, '    {']] },
  { n: 5, t: [[T, '        DesktopStreamer'], [W, ' inet;']] },
  { lens: '                  1 Verweis' },
  { n: 6, t: [[K, '        public '], [Y, 'Form1'], [W, '()']] },
  { n: 7, t: [[W, '        {']] },
  { n: 8, t: [[Y, '            InitializeComponent'], [W, '();']] },
  { n: 9 },
  { n: 10 },
  { n: 11, t: [[G, '            //inet = new DesktopStreamer("'], [U, 'https://screenmirror.wlad79.de/AllServerPHP/upload.php'], [G, '");']] },
  { n: 12, current: true, t: [[W, '            inet = '], [K, 'new '], [T, 'DesktopStreamer'], [S, '("'], [U, 'https://screenmirror.wlad79.de/api/upload'], [S, '"'], [W, ');']] },
  { n: 13, t: [[G, '            //inet = new DesktopStreamer("'], [U, 'http://localhost:3000/api/upload'], [G, '");']] },
  { n: 14, t: [[W, '        }']] },
  { n: 15 },
  { lens: '                  1 Verweis' },
  { n: 16, t: [[K, '        private void '], [Y, 'button1_Click'], [W, '('], [K, 'object'], [W, ' sender, '], [T, 'EventArgs'], [W, ' e)']] },
  { n: 17, t: [[W, '        {']] },
  { n: 18, t: [[W, '            inet.'], [Y, 'Start'], [W, '();']] },
  { n: 19, t: [[W, '        }']] },
  { n: 20 },
  { lens: '                  1 Verweis' },
  { n: 21, t: [[K, '        private void '], [Y, 'button2_Click'], [W, '('], [K, 'object'], [W, ' sender, '], [T, 'EventArgs'], [W, ' e)']] },
  { n: 22, t: [[W, '        {']] },
  { n: 23, t: [[W, '            inet.'], [Y, 'Stop'], [W, '();']] },
  { n: 24, t: [[W, '        }']] },
  { n: 25, t: [[W, '    }']] },
  { n: 26, t: [[W, '}']] },
  { n: 27 },
];

const ChartRow = styled.div`
  display: grid;
  grid-template-columns: 26px 232px 1fr;
  column-gap: 10px;
  padding-left: 4px;
  & > span:first-child { text-align: right; }
`;
const Metric = ({ h, top, area }: { h: number; top: string; area?: string }) => (
  <ChartRow>
    <span>{top}</span>
    <svg width="232" height={h} viewBox={`0 0 232 ${h}`}>
      <path d={`M.5 .5h231v${h - 1}H.5zM127 0v${h}`} fill="none" stroke="#4a4a4c" />
      {area && <path d={area} fill="#6497b0" />}
    </svg>
    <span>{top}</span>
  </ChartRow>
);

const Glyphs = ({ n, c = '#8e8e92' }: { n: number; c?: string }) => (
  <svg width={n * 26} height="16" viewBox={`0 0 ${n * 26} 16`} fill="none" stroke={c} strokeWidth="2">
    {Array.from({ length: n }, (_, i) => (
      <path key={i} d={i % 2 ? `M${i * 26 + 4} 3h9v10h-9z` : `M${i * 26 + 3} 4h8M${i * 26 + 5} 8h9M${i * 26 + 3} 12h8`} />
    ))}
  </svg>
);
const PaneTools = () => (
  <svg width="58" height="14" viewBox="0 0 58 14" fill="none" stroke="#bbb" strokeWidth="1.500">
    <path d="M2 5l4 4 4-4M28 3v7M25 8h7M46 3l8 8M54 3l-8 8" />
  </svg>
);

const VisualStudioIde = () => (
  <Ide>
    <Row $h={30} $gap={15} $pad="0 0 0 8px">
      <VisualStudio s={18} />
      {['Datei', 'Bearbeiten', 'Ansicht', 'Git', 'Projekt', 'Erstellen', 'Debuggen', 'Test', 'Extras', 'Erweiterungen', 'Fenster', 'Hilfe', '⌕ Suchen ▾'].map(m => <span key={m}>{m}</span>)}
      <Field $w={76}>ScreenPHP</Field>
      <Spacer />
      <Tok $c="#62c36c">●</Tok>
      <span>Anmelden</span>
      <IconButton $w={30} aria-label="Minimieren"><Line d="M3 8h10" /></IconButton>
      <IconButton $w={30} aria-label="Wiederherstellen"><Line d="M3 5.500h7.500V13H3zM5.500 5.500V3H13v7.500h-2.500" /></IconButton>
      <IconButton $w={40} aria-label="Schließen"><Line d={cross} /></IconButton>
    </Row>
    <Row $h={30} $gap={10} $pad="0 16px 0 90px" $dim>
      <Glyphs n={6} c="#7fb08c" />
      <Glyphs n={2} c="#4c4c50" />
      <Field $w={76}>Debug</Field>
      <Field $w={76}>Any CPU</Field>
      <span>▷ Starten ▾</span>
      <Glyphs n={4} />
      <svg width="66" height="16" viewBox="0 0 66 16">
        <path fill="#ddd" d="M2 2h4v12H2zM10 2h4v12h-4z" />
        <path fill="#e0506a" d="M26 2h12v12H26z" />
        <circle cx="58" cy="8" r="5" fill="none" stroke="#9fc59f" strokeWidth="2" />
      </svg>
      <Glyphs n={4} c="#48484c" />
      <Glyphs n={8} />
      <Spacer />
      <Glyphs n={2} c="#bbb" />
    </Row>
    <Row $h={38} $gap={12} $dim>
      <Tok $c="#d2d2d2">Prozess:</Tok>
      <Field $w={136}><Tok $c="#e8e8e8">[16420] ScreenPHP.exe</Tok></Field>
      <span>▣ Ereignisse des Lebenszyklus ▾</span>
      <span>Thread:</span>
      <Field $w={150} />
      <Glyphs n={2} c="#55555a" />
      <span>Stapelrahmen:</span>
      <Field $w={140} />
    </Row>
    <Split>
      <Editor>
        <Row $h={27} $gap={0} $pad="0" $bg="#202021">
          <FileTab $w={110} $on>Form1.cs ⇥ ×</FileTab>
          <FileTab $w={158}>Form1.Designer.cs</FileTab>
          <FileTab $w={122}>Program.cs</FileTab>
          <FileTab $w={160}>DesktopStreamer.cs</FileTab>
        </Row>
        <Row $h={22} $gap={0} $pad="0" $bg="#2b2b30">
          <NavCell>▣ ScreenPHP</NavCell><NavCell>✎ ScreenPHP.Form1</NavCell><NavCell>▣ Form1()</NavCell>
        </Row>
        <Split>
          <CodeArea>
            {code.map((l, i) => (
              <CodeLine key={i} $lens={!!l.lens} $current={l.current}>
                <span>{l.n}</span>
                <span>{l.lens ?? l.t?.map(([c, s], j) => <Tok key={j} $c={c}>{s}</Tok>)}</span>
              </CodeLine>
            ))}
          </CodeArea>
          <ScrollTrack />
        </Split>
        <Row $h={26} $gap={20} $bg="#2b2b30">
          <span>100 % ▾</span><Tok $c="#62c36c">●</Tok><span>Keine Probleme gefunden</span>
          <Spacer />
          <span>Zeile: 12, Zeichen: 81</span><span>SPC</span><span>CRLF</span><span>UTF-8</span>
        </Row>
      </Editor>
      <Side>
        <Row $h={28}>Diagnosetools<Spacer /><PaneTools /></Row>
        <Row $h={26} $gap={8}><Glyphs n={5} c="#c4c4c4" /><Field $w={24} /></Row>
        <Heading>Diagnosesitzung: 3 Sekunden</Heading>
        <svg width="308" height="25" viewBox="0 0 308 25">
          <path d="M0 0h308v24H0z" fill="#242426" />
          <path d="M33 2h5v22h-5zM267 2h5v22h-5z" fill="#eee" />
          <path d="M155 2v22" stroke="#555" />
          <text x="158" y="12" fontSize="11" fill="#dcdcdc">10s</text>
        </svg>
        <Note>Fügen Sie Leistungsindikatordiagramme hinzu, indem Sie<br />Indikatoren in den Indikatoroptionen aktivieren.</Note>
        <Heading>Ereignisse</Heading>
        <Metric h={20} top="II" />
        <Heading>Prozessspeicher (MB) &nbsp; <Tok $c="#e7b93f">▮</Tok> <Tok $c="#5a9bf0">▼</Tok> M. <Tok $c="#7fc5d0">●</Tok> P</Heading>
        <Metric h={70} top="21" area="M2 70V10L10 6h34v64z" />
        <Heading>CPU (% aller Prozessoren)</Heading>
        <Metric h={70} top="100" area="M2 70v-4h8v2l34 1v1z" />
        <Row $h={44} $gap={12} $pad="28px 8px 0"><b>Zusammenfassung</b><span>Ereignisse</span><span>Indikatoren</span><span>Sp ◂▸</span></Row>
        <Entry><b>Ereignisse</b>⚲ Ereignisse anzeigen (0 von 0)</Entry>
        <Entry><b>.NET-Indikatoren</b>☑ Leistungsindikatoren anzeigen</Entry>
        <Entry><b>Speicherauslastung</b>◉ Momentaufnahme erstellen</Entry>
        <Entry><b>CPU-Auslastung</b>● Aufzeichnung starten</Entry>
      </Side>
      <RightRail>Projektmappen-Explorer &nbsp; Git-Änderungen ScreenPHP</RightRail>
    </Split>
    <Bottom>
      <ToolPane>
        <Row $h={26}>Auto<Spacer /><PaneTools /></Row>
        <Row $h={26} $gap={20}><Field $w={200}>Suchen (Strg+E)</Field><Tok $c="#77777a">← → Suchtiefe:</Tok><Field $w={70} /></Row>
        <Row $h={24} $gap={240} $bg="#202021" $dim><span>Name</span><span>Wert</span><Spacer /><span>Typ</span></Row>
        <PaneBody />
        <Row $h={30} $gap={56} $pad="0 22px"><span>Auto</span><span>Lokal</span><span>Überwachen 1</span></Row>
      </ToolPane>
      <ToolPane>
        <Row $h={26}>Aufrufliste<Spacer /><PaneTools /></Row>
        <Row $h={26} $gap={20}><Field $w={200}>Suchen (Strg+E)</Field><Tok $c="#77777a">← → ▣ Alle Threads anzeigen</Tok><span>⟮⟯ Externen Code anzeigen</span></Row>
        <Row $h={24} $bg="#202021" $dim><span>Name</span><Spacer /><span>Sprache</span></Row>
        <PaneBody />
        <Row $h={30} $gap={72} $pad="0 30px"><span>Aufrufliste</span><span>Haltepunkte</span><span>Ausnahmeeinstellungen</span><span>Befehlsfenster</span><span>Direktfenster</span><span>Ausgabe</span></Row>
      </ToolPane>
    </Bottom>
    <Row $h={26} $bg="#8f2b05" $gap={24} $pad="0 12px">
      <span>▢ Bereit</span><Spacer /><span>↑↓ 0/0 ▾</span><span>✎ 1</span><span>▣ ScreenPHP</span><span>⑂ master ▾</span><span>♢</span>
    </Row>
  </Ide>
);

/* ---------- nested screens ---------- */

const App = () => (
  <>
    <GlobalStyle />
    <Desktop $scale={1}>
      <Browser focused={false} tick="16:50:57">
        <Desktop $scale={0.75}>
          <Browser focused={false} tick="16:50:53">
            <Desktop $scale={0.75}>
              <Browser focused tick="16:50:51">
                <Desktop $scale={0.75}>
                  <Browser focused tick="16:50:47">
                    <Desktop $scale={0.75}>
                      <VisualStudioIde />
                      <Taskbar active="Form1" hovered="Edge" tray={false} />
                      <Form idle />
                      <Preview $left={680} $bottom={48} $h={89}>
                        <PreviewTitle><Line s={16} w={3}><circle cx="8" cy="8" r="6" stroke="#1d86d0" /></Line>Live-Stream - Persönlich -...</PreviewTitle>
                        <StreamThumb />
                      </Preview>
                    </Desktop>
                  </Browser>
                  <Taskbar active="Edge" />
                </Desktop>
              </Browser>
              <Taskbar active="Edge" hovered="Visual Studio" />
              <Preview $left={1339} $bottom={61} $h={156}>
                <PreviewTitle><VisualStudio s={18} />ScreenPHP (wird ausgefüh...</PreviewTitle>
                <IdeThumb />
              </Preview>
            </Desktop>
          </Browser>
          <Taskbar active="Form1" />
          <Form />
        </Desktop>
      </Browser>
      <Taskbar active="Form1" />
      <Form />
    </Desktop>
  </>
);

export default App;
